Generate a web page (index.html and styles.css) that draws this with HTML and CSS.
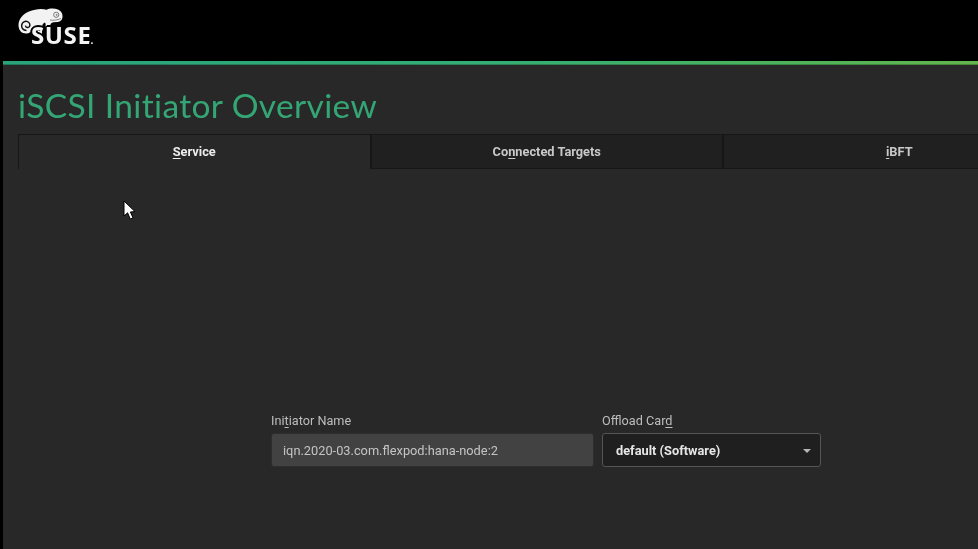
FILE: index.html
```html
<!DOCTYPE html>
<html lang="en">
<head>
<meta charset="utf-8">
<title>iSCSI Initiator Overview</title>
<link rel="stylesheet" href="styles.css">
</head>
<body>
<div class="screen">
<header class="topbar">
  <div class="logo">
    <svg class="logo-mark" width="46" height="28" viewBox="0 0 46 28" aria-hidden="true">
      <path class="fill" d="M0.5 17 C0.5 11 5 6 11 3.5 C17 1 24 0 28.5 1.8 C31 0.5 36 0 40 1.5 C43.5 3 44.8 6 44.5 9 C44.3 12 42.5 13.6 39.5 14 L35.5 14.2 C33 14.5 32 16 32 19.5 L27 19.5 C28 17.5 27.8 15.8 27 14.6 C25 15.2 24 17 24 20 L24 26 L15 26 C15.5 23 15 21 14.5 20 C14.5 23 12 25.5 8 25.5 C3.5 25.5 0.5 22 0.5 17 Z"/>
      <path class="cut" d="M8.5 22.5 C5 22.5 3.2 19.8 3.7 17 C4.2 14.3 7 12.7 9.5 13.6 C12 14.5 12.6 17.5 11 19 C9.6 20.2 7.4 19.4 7.6 17.6"/>
      <circle class="eye" cx="38.2" cy="6.8" r="2.6"/>
      <circle class="pupil" cx="38.6" cy="6.8" r="0.9"/>
      <path class="cut thin" d="M32 12 C35 12.6 39 12.2 43 10.5"/>
    </svg>
    <span class="logo-word">SUSE<span class="logo-dot">.</span></span>
  </div>
</header>
<div class="accent"></div>
<main class="content">
  <h1 class="title">iSCSI Initiator Overview</h1>
  <nav class="tabs">
    <div class="tab tab-active"><span><u>S</u>ervice</span></div>
    <div class="tab"><span>Co<u>n</u>nected Targets</span></div>
    <div class="tab"><span><u>i</u>BFT</span></div>
  </nav>
  <section class="form">
    <div class="field field-name">
      <label class="label">Ini<u>t</u>iator Name</label>
      <div class="input">iqn.2020-03.com.flexpod:hana-node:2</div>
    </div>
    <div class="field field-card">
      <label class="label">Offload Car<u>d</u></label>
      <div class="select"><span>default (Software)</span><i class="caret"></i></div>
    </div>
  </section>
</main>
<svg class="cursor" width="14" height="22" viewBox="0 0 14 22" aria-hidden="true">
  <path d="M1 1 L1 16 L4.6 12.8 L7.2 19 L10 17.8 L7.4 12 L12 11.6 Z"/>
</svg>
</div>
</body>
</html>
```
FILE: styles.css
```css
* { box-sizing: border-box; }
html, body { margin: 0; height: 100%; background: #000; overflow: hidden; }
.screen {
  height: 549px;
  background: #282828;
  border-left: 3px solid #000;
  font-family: Roboto, "Liberation Sans", sans-serif;
  overflow: hidden;
  position: relative;
  color: #ddd;
  filter: blur(0.35px);
}
u { text-underline-offset: 2px; text-decoration-thickness: 1px; }
.topbar {
  height: 61px;
  background: #000;
  padding: 8px 0 0 15px;
}
.logo { position: relative; width: 80px; height: 40px; }
.logo-mark { position: absolute; left: 0; top: 0; }
.fill { fill: #f2f2f2; }
.cut { fill: none; stroke: #111; stroke-width: 1.5; }
.cut.thin { stroke-width: 0.8; stroke: #666; }
.eye { fill: none; stroke: #777; stroke-width: 1; }
.pupil { fill: #777; }
.logo-word {
  position: absolute;
  left: 13px;
  top: 16px;
  font: 700 24px/22px "Open Sans", "Liberation Sans", sans-serif;
  letter-spacing: 0.6px;
  color: #f4f4f4;
  text-shadow: -1.5px -1.5px 0 #000, 1.5px -1.5px 0 #000, 0 -2px 0 #000, -2px 0 0 #000;
}
.logo-dot { font-size: 10px; letter-spacing: 0; margin-left: -1px; }
.accent {
  height: 4px;
  background: linear-gradient(90deg, #2aa37c 0%, #35ad74 50%, #4cb35c 80%, #64b54c 100%);
  box-shadow: inset 0 -1px 0 rgba(0,0,0,.25);
}
.content { padding: 0 0 0 15px; }
.title {
  margin: 20px 0 0;
  font: 400 33.5px/40px Lato, "Open Sans", sans-serif;
  color: #34a675;
  letter-spacing: 0.36px;
  white-space: nowrap;
}
.tabs {
  display: grid;
  grid-template-columns: 352.5px 352.5px 352.5px;
  margin-top: 9px;
  height: 35px;
  overflow: hidden;
}
.tab {
  display: flex;
  align-items: center;
  justify-content: center;
  background: #202020;
  border: 1px solid #161616;
  font-size: 12.8px;
  font-weight: 700;
  color: #c8c8c8;
}
.tab-active {
  background: #282828;
  border-bottom: 0;
  color: #ededed;
  padding-bottom: 1px;
}
.form {
  display: flex;
  gap: 8px;
  margin: 244px 0 0 253px;
}
.field { display: flex; flex-direction: column; gap: 4px; }
.field-name { width: 323px; }
.field-card { width: 219px; }
.label { font-size: 12.7px; line-height: 16px; color: #bdbdbd; }
.input, .select {
  height: 34px;
  display: flex;
  align-items: center;
  border-radius: 3px;
  font-size: 12.8px;
  padding-top: 1px;
}
.input {
  background: #424242;
  border: 1px solid #2e2e2e;
  padding-left: 11px;
  color: #c4c4c4;
}
.select {
  justify-content: space-between;
  background: #1f1f1f;
  border: 1px solid #555;
  padding: 1px 9px 0 13px;
  font-weight: 700;
  color: #e6e6e6;
}
.caret {
  width: 0;
  height: 0;
  border-left: 4px solid transparent;
  border-right: 4px solid transparent;
  border-top: 4px solid #b5b5b5;
}
.cursor {
  position: absolute;
  left: 120px;
  top: 200px;
}
.cursor path { fill: #fff; stroke: #000; stroke-width: 1; }
```
